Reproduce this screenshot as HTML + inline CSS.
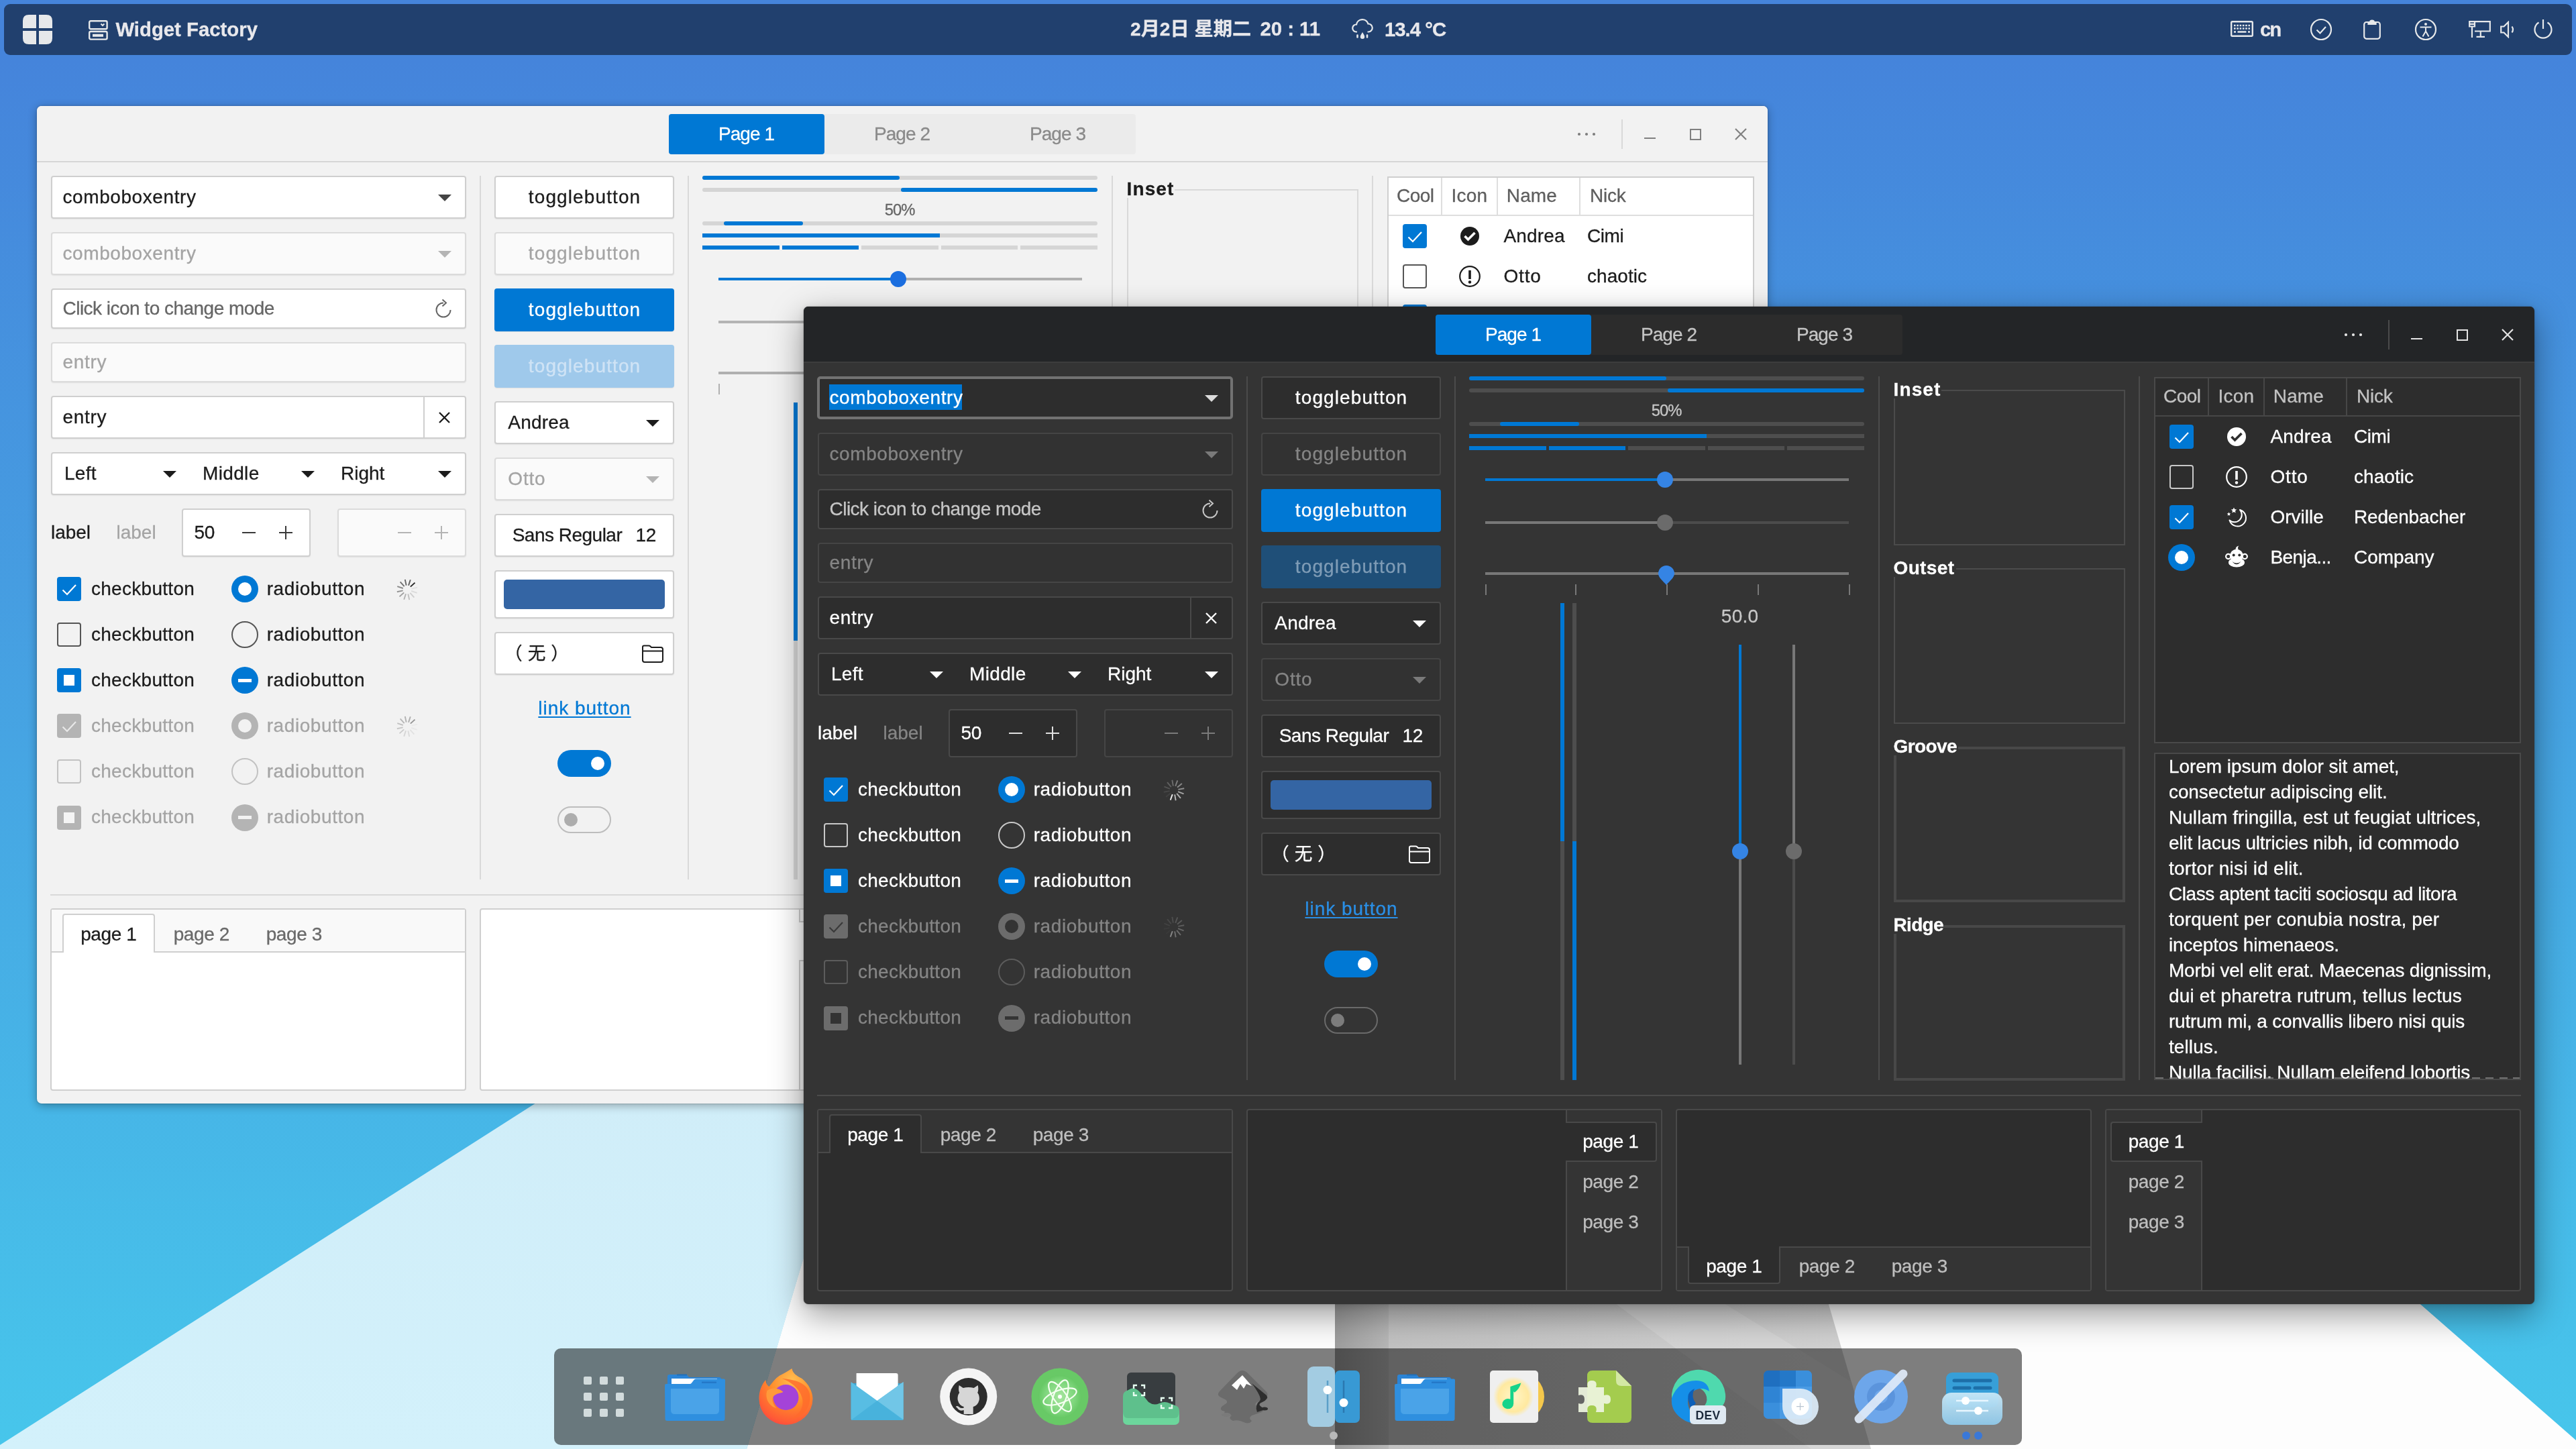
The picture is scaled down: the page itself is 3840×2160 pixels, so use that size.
<!DOCTYPE html>
<html lang="zh-CN"><head><meta charset="utf-8"><title>Widget Factory</title><style>
*{box-sizing:border-box}
html,body{margin:0;padding:0}
body{width:3840px;height:2160px;position:relative;overflow:hidden;background:linear-gradient(180deg,#4584db 0%,#4584db 4%,#47c6eb 100%);font-family:"Liberation Sans","Noto Sans CJK SC",sans-serif;font-size:28px}
.abs,.win div,.win i,.win svg,.panel div,.panel svg,.dock svg,.dock i{position:absolute}
i{display:block;font-style:normal}
.t{position:absolute;white-space:pre;color:var(--fg);-webkit-text-stroke:.3px}
.cjk{font-family:"Liberation Sans","Noto Sans CJK SC",sans-serif;text-spacing-trim:space-all}
.win{will-change:transform;position:absolute;width:2580px;height:1487px;border-radius:7px;background:var(--bg)}
.win.light{--bg:#f2f2f2;--hb:#f2f2f2;--hbline:#d6d6d6;--base:#fff;--bd:#cfcfcf;--fg:#1c1c1c;--fg2:#666;--fg3:#666;--dfg:#a4a4a4;--disbg:#fafafa;--disbd:#dbdbdb;
 --acc:#0078d4;--sep:#d9d9d9;--tr:#d5d5d5;--str:#b0b0b0;--strd:#b4b4b4;--strd2:#d4d4d4;--knob:#1c6fe0;--knobd:#b8b8b8;--swbg:#ebebeb;--swtx:#8a8a8a;--hfg:#808080;
 --onaccd:#cfe3f5;--accd:#9fc9eb;--cbbd:#555;--cbd:#b4b4b4;--cbdbd:#c2c2c2;--arrow:#444;--darrow:#b4b4b4;--thtx:#5e5e5e;--tline:#dedede;--nbtx:#6a6a6a;--nbhead:#f9f9f9;--swoff:#bdbdbd;--swknob:#adadad;--fgs:#3a3a3a;--spin:#222;--grv:#dcdcdc;
 box-shadow:0 3px 14px rgba(0,0,0,.32),0 0 3px rgba(0,0,0,.25)}
.win.dark{--bg:#343434;--hb:#232527;--hbline:#3d3d3d;--base:#2d2d2d;--bd:#494949;--fg:#fff;--fg2:#c6c6c6;--fg3:#c6c6c6;--dfg:#858585;--disbg:#323232;--disbd:#454545;
 --acc:#0078d4;--sep:#4b4b4b;--tr:#4e4e4e;--str:#787878;--strd:#787878;--strd2:#4c4c4c;--knob:#3584e4;--knobd:#6b6b6b;--swbg:#2c2c2c;--swtx:#c4c4c4;--hfg:#e4e4e4;
 --onaccd:#7f9cb6;--accd:#1f4f78;--cbbd:#c8c8c8;--cbd:#6c6c6c;--cbdbd:#5c5c5c;--arrow:#dcdcdc;--darrow:#7a7a7a;--thtx:#c2c2c2;--tline:#474747;--nbtx:#bebebe;--nbhead:#343434;--swoff:#6a6a6a;--swknob:#7c7c7c;--fgs:#e0e0e0;--spin:#eee;--grv:#484848;
 box-shadow:0 16px 50px rgba(0,0,0,.4),0 2px 12px rgba(0,0,0,.14),0 0 2px rgba(0,0,0,.35)}
.hb{left:0;top:0;width:2580px;height:84px;background:var(--hb);border-bottom:2px solid var(--hbline);border-radius:7px 7px 0 0}
.swbg{background:var(--swbg);border-radius:4px}
.swon{background:var(--acc);border-radius:4px}
.swtx{color:var(--swtx)}
.onacc{color:#fff}
.onaccd{color:var(--onaccd)}
.hdot{width:3.5px;height:3.5px;border-radius:50%;background:var(--hfg)}
.hsepv{background:var(--sep)}
.hfg{color:var(--hfg)}
i.ln{background:currentColor}
.hmax{width:17px;height:17px;border:2px solid var(--hfg)}
.fg{color:var(--fg)}.fg2{color:var(--fg2)}.fg3{color:var(--fg3)}.fg2b{color:var(--fg2)}.dtx{color:var(--dfg)}.dfg{color:var(--darrow)}.fgs{color:var(--fgs)}
.fgarrow{color:var(--arrow)}.darrow{color:var(--darrow)}
.en,.bt{background:var(--base);border:2px solid var(--bd);border-radius:4px}
.light .en,.light .bt{box-shadow:0 1px 1.5px rgba(0,0,0,.07)}
.en.dis,.bt.dis{background:var(--disbg);border-color:var(--disbd)}
.en.foc{border:4px solid #727272;border-radius:5px}
.sel{background:var(--acc)}
.vline{background:var(--bd)}
.bt.on{background:var(--acc);border-color:var(--acc)}
.bt.on.dis{background:var(--accd);border-color:var(--accd)}
.swatch{background:#3465a4;border-radius:5px}
.link{color:var(--acc);text-decoration:underline;text-decoration-thickness:2px;text-underline-offset:3px}
.dark .link{color:#2a8fe6}
.sw{border-radius:20px}
.sw.on{background:var(--acc)}
.sw.off{border:2px solid var(--swoff)}
.sw i{top:10px;width:20px;height:20px;border-radius:50%;background:#fff}
.sw.off i{top:8px;left:9px;background:var(--swknob)}
.cb{width:36px;height:36px;border-radius:4px;color:#fff}
.cb.off{border:2px solid var(--cbbd)}
.cb.on,.cb.mix{background:var(--acc)}
.cb.dis.on,.cb.dis.mix{background:var(--cbd)}
.cb.dis.off{border-color:var(--cbdbd)}
.light .cb.dis{color:#e8e8e8}.dark .cb.dis{color:#3a3a3a}
.cb .sq{left:10px;top:10px;width:16px;height:16px;background:currentColor}
.light .cb.dis .sq{background:#f4f4f4}.dark .cb.dis .sq{background:#333}
.rb{width:40px;height:40px;border-radius:50%}
.rb.off{border:2px solid var(--cbbd)}
.rb.on,.rb.mix{background:var(--acc)}
.rb.dis.on,.rb.dis.mix{background:var(--cbd)}
.rb.dis.off{border-color:var(--cbdbd)}
.rb .dot{left:10px;top:10px;width:20px;height:20px;border-radius:50%;background:#fff}
.rb .bar{left:10px;top:17.5px;width:20px;height:5px;background:#fff}
.light .rb.dis .dot,.light .rb.dis .bar{background:#f2f2f2}
.dark .rb.dis .dot,.dark .rb.dis .bar{background:#343434}
.spin{color:var(--spin)}.spin.dis{opacity:.45}
.vsep,.hsep{background:var(--sep)}
.tr{background:var(--tr)}.fill{background:var(--acc)}.rnd{border-radius:3px}
.str{background:var(--str)}.strd{background:var(--strd)}.strd2{background:var(--strd2)}
.knob{width:24px;height:24px;border-radius:50%;background:var(--knob)}
.knob.dis{background:var(--knobd)}
.knobc{color:var(--knob)}
.tick{background:var(--str)}
.fr{border:2px solid var(--sep)}
.fr.gr,.fr.rd{border-width:4px;border-color:var(--grv)}
.frlbg{background:var(--bg)}
.view{background:var(--base);border:2px solid var(--bd)}
.clip{overflow:hidden}
.dash{background:repeating-linear-gradient(90deg,var(--dfg) 0 12px,transparent 12px 20.500px);opacity:.8}
.thead{background:var(--base)}
.tline{background:var(--tline)}
.thtx{color:var(--thtx)}
.knock{stroke:var(--base)}.knockf{fill:var(--base)}
.nb{background:var(--base);border:2px solid var(--bd);border-radius:4px}
.nbhead{background:var(--nbhead)}
.nbline{background:var(--bd)}
.nbtab{background:var(--base);border:2px solid var(--bd)}
.nbtx{color:var(--nbtx)}
.panel{will-change:transform;position:absolute;left:6px;top:6px;width:3828px;height:76px;border-radius:9px;background:#21406e;color:#e8e8ec}
.panel .t{color:#e8e8ec;font-weight:700;font-size:29.33px}
.dock{position:absolute;left:826px;top:2010px;width:2188px;height:144px;border-radius:10px;background:rgba(0,0,0,.5)}
</style></head><body><svg class="abs" style="position:absolute;left:0;top:0" width="3840" height="2160" viewBox="0 0 3840 2160"><defs><linearGradient id="lb" x1="0" y1="0" x2="0" y2="1"><stop offset="0" stop-color="#cdeaf6"/><stop offset="1" stop-color="#d3f1fb"/></linearGradient><linearGradient id="gs" x1="0" y1="0" x2="1" y2="0"><stop offset="0" stop-color="#9d9d9d"/><stop offset="1" stop-color="#b7b7b7"/></linearGradient><linearGradient id="gr" x1="0" y1="0" x2="1" y2="0"><stop offset="0" stop-color="#c2c2c2"/><stop offset="1" stop-color="#d2d2d2"/></linearGradient><linearGradient id="wsh" x1="0" y1="0" x2="0" y2="1"><stop offset="0" stop-color="#000" stop-opacity=".0"/><stop offset="1" stop-color="#000" stop-opacity="0"/></linearGradient></defs><path d="M0 2154L1600 1133L1340 1400L1113 2160H0Z" fill="url(#lb)"/><path d="M1113 2160L1250 1700L1300 1500H3100L3840 2147V2160Z" fill="#fdfdfd"/><path d="M2070 1900H2713L2789 2160H2070Z" fill="url(#gr)"/><path d="M2350 1900L2500 1900L2760 2060L2789 2160L2700 2160Z" fill="#dadada" opacity=".55"/><path d="M1990 1900H2070V2160H1990Z" fill="url(#gs)"/></svg><div class="panel"><svg style="left:28px;top:16px" width="44" height="44" viewBox="0 0 44 44" fill="#e6e8ea"><path d="M9 0H20V20H0V9Q0 0 9 0Z"/><path d="M24 0H35Q44 0 44 9V20H24Z"/><path d="M0 24H20V44H9Q0 44 0 35Z"/><path d="M24 24H44V35Q44 44 35 44H24Z"/></svg><svg style="left:126px;top:24px" width="29" height="30" viewBox="0 0 29 30" fill="none" stroke="#e6e8ea" stroke-width="2.4"><rect x="1.2" y="1.2" width="26.4" height="12" rx="2"/><rect x="1.2" y="17" width="26.4" height="11.6" rx="2"/><path d="M6 22.8H22" stroke-width="4"/><path d="M18.5 5.500L21 8L23.500 5.500" stroke-width="2"/></svg><div class="t" style="top:16px;height:44px;line-height:44px;font-size:29.33px;font-weight:700;left:166.4px;">Widget Factory</div><div class="t" style="left:1679px;top:14.5px;height:44px;line-height:44px"><span style="font-size:28.2px">2月2日 星期二</span><span style="margin-left:-3px">  20 : 11</span></div><svg style="left:2008px;top:20px" width="34" height="36" viewBox="0 0 34 36" fill="none" stroke="#e6e8ea" stroke-width="2.2"><path d="M9 21.500H7.500A5.500 5.500 0 0 1 8 10.500A9 9 0 0 1 25.500 9.500A6 6 0 0 1 26 21.500H24.500"/><path d="M9.5 26.500v3M24 26.500v3" stroke-width="2.6" stroke-linecap="round"/><path d="M17 22C19 25.500 20.200 27 20.200 28.800A3.200 3.200 0 0 1 13.800 28.800C13.800 27 15 25.500 17 22Z" fill="#e6e8ea" stroke="none"/></svg><div class="t" style="top:16px;height:44px;line-height:44px;font-size:29.33px;font-weight:700;left:2058px;letter-spacing:-1px;">13.4 °C</div><svg style="left:3319px;top:25px" width="34" height="24" viewBox="0 0 34 24" fill="none" stroke="#e6e8ea"><rect x="1.2" y="1.2" width="31.6" height="21.600" rx="1.500" stroke-width="2.4"/><path d="M5 7H29M5 11.500H29" stroke-width="2.600" stroke-dasharray="2.600 1.700"/><path d="M5 16.500H8M10.500 16.500H23.500M26 16.500H29" stroke-width="2.600"/></svg><div class="t" style="top:16px;height:44px;line-height:44px;font-size:29.33px;font-weight:700;left:3363px;letter-spacing:-2px;">cn</div><svg style="left:3437px;top:21px" width="34" height="34" viewBox="-17 -17 34 34" fill="none" stroke="#e6e8ea" stroke-width="2.2"><circle r="15"/><path d="M-6.500 0.500L-1.500 5.500L7 -4"/></svg><svg style="left:3517px;top:21px" width="26" height="32" viewBox="0 0 26 32" fill="none" stroke="#e6e8ea" stroke-width="2.2"><rect x="1.2" y="6" width="23.600" height="24.800" rx="3.500"/><path d="M7.500 9V6.500H10A3 3 0 0 1 16 6.500H18.500V9Z" fill="#e6e8ea"/></svg><svg style="left:3593px;top:21px" width="34" height="34" viewBox="-17 -17 34 34" fill="none" stroke="#e6e8ea" stroke-width="2.200"><circle r="15"/><circle cy="-8" r="2" fill="#e6e8ea" stroke="none"/><path d="M-8.500 -3.500H8.500M0 -3.500V2.500M-4.500 10.500L0 2.500L4.500 10.500" stroke-width="2"/></svg><svg style="left:3674px;top:25px" width="33" height="26" viewBox="0 0 33 26" fill="none" stroke="#e6e8ea" stroke-width="2.200"><path d="M9 1.200H31.800V15.500H9"/><path d="M1.200 1.200H9V8.500H1.200ZM1.200 4.800H9M5 8.500V25"/><path d="M11.500 23.800H24M17.800 15.500V23.800"/></svg><svg style="left:3721px;top:25px" width="22" height="26" viewBox="0 0 22 26" fill="none" stroke="#e6e8ea" stroke-width="2.200"><path d="M1.200 8.500H5.500L12 2V24L5.500 17.500H1.200Z"/><path d="M17.500 8.500Q20.500 13 17.500 17.500"/></svg><svg style="left:3770px;top:22px" width="30" height="32" viewBox="-15 -16 30 32" fill="none" stroke="#e6e8ea" stroke-width="2.200"><path d="M-6.500 -10.500A12.500 12.500 0 1 0 6.500 -10.500"/><path d="M0 -15V-1"/></svg></div><div class="win light" style="left:55px;top:158px"><div class="hb"></div><div class="swbg" style="left:942px;top:12px;width:696px;height:60px;"></div><div class="swon" style="left:942px;top:12px;width:232px;height:60px;"></div><div class="t onacc" style="top:20px;height:44px;line-height:44px;letter-spacing:-0.96px;left:457.52px;width:1200px;text-align:center;">Page 1</div><div class="t swtx" style="top:20px;height:44px;line-height:44px;letter-spacing:-0.96px;left:689.52px;width:1200px;text-align:center;">Page 2</div><div class="t swtx" style="top:20px;height:44px;line-height:44px;letter-spacing:-0.96px;left:921.52px;width:1200px;text-align:center;">Page 3</div><i class="hdot" style="left:2297.25px;top:40.25px"></i><i class="hdot" style="left:2308.25px;top:40.25px"></i><i class="hdot" style="left:2319.25px;top:40.25px"></i><div class="hsepv" style="left:2362px;top:20px;width:2px;height:44px;"></div><i class="ln hfg" style="left:2396px;top:47px;width:17px;height:2px"></i><i class="hmax" style="left:2464px;top:34px"></i><svg class="hfg" style="left:2530px;top:32px" width="20" height="20" viewBox="-10.0 -10.0 20 20"><path d="M-8.0 -8.0L8.0 8.0M8.0 -8.0L-8.0 8.0" stroke="currentColor" stroke-width="2.2" fill="none"/></svg><div class="vsep" style="left:660px;top:104px;width:2px;height:1049px;"></div><div class="vsep" style="left:970px;top:104px;width:2px;height:1049px;"></div><div class="vsep" style="left:1602px;top:104px;width:2px;height:1049px;"></div><div class="vsep" style="left:1990px;top:104px;width:2px;height:1049px;"></div><div class="en" style="left:20.5px;top:104px;width:619.5px;height:64px;"></div><div class="t" style="top:114px;height:44px;line-height:44px;letter-spacing:0.58px;left:38.5px;">comboboxentry</div><svg class="fgarrow" style="left:597.5px;top:132px" width="20" height="10" viewBox="0 0 20 10"><path d="M0 0H20L10 10Z" fill="currentColor"/></svg><div class="en dis" style="left:20.5px;top:188px;width:619.5px;height:64px;"></div><div class="t dtx" style="top:198px;height:44px;line-height:44px;letter-spacing:0.58px;left:38.5px;">comboboxentry</div><svg class="darrow" style="left:597.5px;top:216px" width="20" height="10" viewBox="0 0 20 10"><path d="M0 0H20L10 10Z" fill="currentColor"/></svg><div class="en" style="left:20.5px;top:272px;width:619.5px;height:60px;"></div><div class="t fg2" style="top:280px;height:44px;line-height:44px;letter-spacing:-0.52px;left:38.5px;">Click icon to change mode</div><svg class="fg2" style="left:592px;top:287px" width="28" height="32" viewBox="-14 -16 28 32"><path d="M0 -9.5A10.5 10.5 0 1 0 10.5 1" fill="none" stroke="currentColor" stroke-width="2"/><path d="M-1.5 -14.5L4 -9.5L-1.5 -4.5" fill="none" stroke="currentColor" stroke-width="2"/></svg><div class="en dis" style="left:20.5px;top:352px;width:619.5px;height:60px;"></div><div class="t dtx" style="top:360px;height:44px;line-height:44px;letter-spacing:0.7px;left:38.5px;">entry</div><div class="en" style="left:20.5px;top:432px;width:619.5px;height:64px;"></div><div class="vline" style="left:576px;top:434px;width:2px;height:60px;"></div><div class="t" style="top:442px;height:44px;line-height:44px;letter-spacing:0.7px;left:38.5px;">entry</div><svg class="fg" style="left:598.2px;top:455px" width="19" height="19" viewBox="-9.5 -9.5 19 19"><path d="M-7.5 -7.5L7.5 7.5M7.5 -7.5L-7.5 7.5" stroke="currentColor" stroke-width="2.4" fill="none"/></svg><div class="en" style="left:20.5px;top:516px;width:619.5px;height:64px;"></div><div class="t" style="top:526px;height:44px;line-height:44px;letter-spacing:0.27px;left:41px;">Left</div><svg class="fg" style="left:188px;top:544px" width="20" height="10" viewBox="0 0 20 10"><path d="M0 0H20L10 10Z" fill="currentColor"/></svg><div class="t" style="top:526px;height:44px;line-height:44px;letter-spacing:0.35px;left:247px;">Middle</div><svg class="fg" style="left:394px;top:544px" width="20" height="10" viewBox="0 0 20 10"><path d="M0 0H20L10 10Z" fill="currentColor"/></svg><div class="t" style="top:526px;height:44px;line-height:44px;left:453px;">Right</div><svg class="fg" style="left:597.5px;top:544px" width="20" height="10" viewBox="0 0 20 10"><path d="M0 0H20L10 10Z" fill="currentColor"/></svg><div class="t" style="top:614px;height:44px;line-height:44px;letter-spacing:-0.03px;left:21px;">label</div><div class="t dtx" style="top:614px;height:44px;line-height:44px;letter-spacing:-0.03px;left:118.6px;">label</div><div class="en" style="left:216px;top:600px;width:192px;height:72px;"></div><div class="t" style="top:614px;height:44px;line-height:44px;letter-spacing:-0.33px;left:234.6px;">50</div><i class="ln fgs" style="left:306px;top:635px;width:20px;height:2px"></i><i class="ln fgs" style="left:361px;top:635px;width:20px;height:2px"></i><i class="ln fgs" style="left:370px;top:626px;width:2px;height:20px"></i><div class="en dis" style="left:448px;top:600px;width:192px;height:72px;"></div><i class="ln dfg" style="left:538px;top:635px;width:20px;height:2px"></i><i class="ln dfg" style="left:593px;top:635px;width:20px;height:2px"></i><i class="ln dfg" style="left:602px;top:626px;width:2px;height:20px"></i><div class="cb on" style="left:29.7px;top:702px"><svg width="36" height="36" viewBox="0 0 36 36" style="position:absolute;left:0;top:0"><path d="M8.5 19.5L15 26L28 12" fill="none" stroke="currentColor" stroke-width="2.2"/></svg></div><div class="t" style="top:697.5px;height:44px;line-height:44px;letter-spacing:0.3px;left:80.9px;">checkbutton</div><div class="rb on" style="left:289.8px;top:700px"><i class="dot"></i></div><div class="t" style="top:697.5px;height:44px;line-height:44px;letter-spacing:0.58px;left:342.7px;">radiobutton</div><svg class="spin" style="left:535.3px;top:703.6px" width="34" height="34" viewBox="-17 -17 34 34"><path d="M4.83 -4.35L11.52 -10.37" stroke="currentColor" stroke-width="1.9" stroke-opacity="1.00"/><path d="M2.01 -6.18L4.79 -14.74" stroke="currentColor" stroke-width="1.9" stroke-opacity="0.72"/><path d="M-1.35 -6.36L-3.22 -15.16" stroke="currentColor" stroke-width="1.9" stroke-opacity="0.68"/><path d="M-4.35 -4.83L-10.37 -11.52" stroke="currentColor" stroke-width="1.9" stroke-opacity="0.62"/><path d="M-6.18 -2.01L-14.74 -4.79" stroke="currentColor" stroke-width="1.9" stroke-opacity="0.50"/><path d="M-6.36 1.35L-15.16 3.22" stroke="currentColor" stroke-width="1.9" stroke-opacity="0.45"/><path d="M-4.83 4.35L-11.52 10.37" stroke="currentColor" stroke-width="1.9" stroke-opacity="0.40"/><path d="M-2.01 6.18L-4.79 14.74" stroke="currentColor" stroke-width="1.9" stroke-opacity="0.30"/><path d="M1.35 6.36L3.22 15.16" stroke="currentColor" stroke-width="1.9" stroke-opacity="0.24"/><path d="M4.35 4.83L10.37 11.52" stroke="currentColor" stroke-width="1.9" stroke-opacity="0.17"/><path d="M6.18 2.01L14.74 4.79" stroke="currentColor" stroke-width="1.9" stroke-opacity="0.10"/><path d="M6.36 -1.35L15.16 -3.22" stroke="currentColor" stroke-width="1.9" stroke-opacity="0.07"/></svg><div class="cb off" style="left:29.7px;top:770.1px"></div><div class="t" style="top:765.6px;height:44px;line-height:44px;letter-spacing:0.3px;left:80.9px;">checkbutton</div><div class="rb off" style="left:289.8px;top:768.1px"></div><div class="t" style="top:765.6px;height:44px;line-height:44px;letter-spacing:0.58px;left:342.7px;">radiobutton</div><div class="cb mix" style="left:29.7px;top:838.2px"><i class="sq"></i></div><div class="t" style="top:833.7px;height:44px;line-height:44px;letter-spacing:0.3px;left:80.9px;">checkbutton</div><div class="rb mix" style="left:289.8px;top:836.2px"><i class="bar"></i></div><div class="t" style="top:833.7px;height:44px;line-height:44px;letter-spacing:0.58px;left:342.7px;">radiobutton</div><div class="cb on dis" style="left:29.7px;top:906.3px"><svg width="36" height="36" viewBox="0 0 36 36" style="position:absolute;left:0;top:0"><path d="M8.5 19.5L15 26L28 12" fill="none" stroke="currentColor" stroke-width="2.2"/></svg></div><div class="t dtx" style="top:901.8px;height:44px;line-height:44px;letter-spacing:0.3px;left:80.9px;">checkbutton</div><div class="rb on dis" style="left:289.8px;top:904.3px"><i class="dot"></i></div><div class="t dtx" style="top:901.8px;height:44px;line-height:44px;letter-spacing:0.58px;left:342.7px;">radiobutton</div><svg class="spin dis" style="left:535.3px;top:907.9px" width="34" height="34" viewBox="-17 -17 34 34"><path d="M4.83 -4.35L11.52 -10.37" stroke="currentColor" stroke-width="1.9" stroke-opacity="1.00"/><path d="M2.01 -6.18L4.79 -14.74" stroke="currentColor" stroke-width="1.9" stroke-opacity="0.72"/><path d="M-1.35 -6.36L-3.22 -15.16" stroke="currentColor" stroke-width="1.9" stroke-opacity="0.68"/><path d="M-4.35 -4.83L-10.37 -11.52" stroke="currentColor" stroke-width="1.9" stroke-opacity="0.62"/><path d="M-6.18 -2.01L-14.74 -4.79" stroke="currentColor" stroke-width="1.9" stroke-opacity="0.50"/><path d="M-6.36 1.35L-15.16 3.22" stroke="currentColor" stroke-width="1.9" stroke-opacity="0.45"/><path d="M-4.83 4.35L-11.52 10.37" stroke="currentColor" stroke-width="1.9" stroke-opacity="0.40"/><path d="M-2.01 6.18L-4.79 14.74" stroke="currentColor" stroke-width="1.9" stroke-opacity="0.30"/><path d="M1.35 6.36L3.22 15.16" stroke="currentColor" stroke-width="1.9" stroke-opacity="0.24"/><path d="M4.35 4.83L10.37 11.52" stroke="currentColor" stroke-width="1.9" stroke-opacity="0.17"/><path d="M6.18 2.01L14.74 4.79" stroke="currentColor" stroke-width="1.9" stroke-opacity="0.10"/><path d="M6.36 -1.35L15.16 -3.22" stroke="currentColor" stroke-width="1.9" stroke-opacity="0.07"/></svg><div class="cb off dis" style="left:29.7px;top:974.4px"></div><div class="t dtx" style="top:969.9px;height:44px;line-height:44px;letter-spacing:0.3px;left:80.9px;">checkbutton</div><div class="rb off dis" style="left:289.8px;top:972.4px"></div><div class="t dtx" style="top:969.9px;height:44px;line-height:44px;letter-spacing:0.58px;left:342.7px;">radiobutton</div><div class="cb mix dis" style="left:29.7px;top:1042.5px"><i class="sq"></i></div><div class="t dtx" style="top:1038px;height:44px;line-height:44px;letter-spacing:0.3px;left:80.9px;">checkbutton</div><div class="rb mix dis" style="left:289.8px;top:1040.5px"><i class="bar"></i></div><div class="t dtx" style="top:1038px;height:44px;line-height:44px;letter-spacing:0.58px;left:342.7px;">radiobutton</div><div class="bt" style="left:682px;top:104px;width:268px;height:64px;"></div><div class="t" style="top:114px;height:44px;line-height:44px;letter-spacing:1.11px;left:216.56px;width:1200px;text-align:center;">togglebutton</div><div class="bt dis" style="left:682px;top:188px;width:268px;height:64px;"></div><div class="t dtx" style="top:198px;height:44px;line-height:44px;letter-spacing:1.11px;left:216.56px;width:1200px;text-align:center;">togglebutton</div><div class="bt on" style="left:682px;top:272px;width:268px;height:64px;"></div><div class="t onacc" style="top:282px;height:44px;line-height:44px;letter-spacing:1.11px;left:216.56px;width:1200px;text-align:center;">togglebutton</div><div class="bt on dis" style="left:682px;top:356px;width:268px;height:64px;"></div><div class="t onaccd" style="top:366px;height:44px;line-height:44px;letter-spacing:1.11px;left:216.56px;width:1200px;text-align:center;">togglebutton</div><div class="bt" style="left:682px;top:440px;width:268px;height:64px;"></div><div class="t" style="top:450px;height:44px;line-height:44px;letter-spacing:0.18px;left:702.3px;">Andrea</div><svg class="fg" style="left:908px;top:468px" width="20" height="10" viewBox="0 0 20 10"><path d="M0 0H20L10 10Z" fill="currentColor"/></svg><div class="bt dis" style="left:682px;top:524px;width:268px;height:64px;"></div><div class="t dtx" style="top:534px;height:44px;line-height:44px;letter-spacing:0.82px;left:702.3px;">Otto</div><svg class="darrow" style="left:908px;top:552px" width="20" height="10" viewBox="0 0 20 10"><path d="M0 0H20L10 10Z" fill="currentColor"/></svg><div class="bt" style="left:682px;top:608px;width:268px;height:64px;"></div><div class="t" style="top:618px;height:44px;line-height:44px;letter-spacing:-0.51px;left:708.7px;">Sans Regular</div><div class="t" style="top:618px;height:44px;line-height:44px;letter-spacing:-0.33px;left:892.6px;">12</div><div class="bt" style="left:682px;top:692px;width:268px;height:72px;"></div><div class="swatch" style="left:696px;top:706px;width:240px;height:44px;"></div><div class="bt" style="left:682px;top:784px;width:268px;height:64px;"></div><div class="t cjk" style="top:794px;height:44px;line-height:44px;font-size:26.67px;left:149px;width:1200px;text-align:center;letter-spacing:8px;">（无）</div><svg class="fg" style="left:901px;top:803px" width="34" height="28" viewBox="0 0 34 28"><path d="M2 24V3.5Q2 1.5 4 1.5H11Q12.5 1.5 13.5 2.5L15 4H29Q32 4 32 7V23Q32 26 29 26H5Q2 26 2 23Z" fill="none" stroke="currentColor" stroke-width="2"/><path d="M2 9.5H32" stroke="currentColor" stroke-width="2"/></svg><div class="t link" style="top:876px;height:44px;line-height:44px;letter-spacing:0.96px;left:216.48px;width:1200px;text-align:center;">link button</div><div class="sw on" style="left:776px;top:960px;width:80px;height:40px;"><i style="left:50px"></i></div><div class="sw off" style="left:776px;top:1044px;width:80px;height:40px;"><i style="left:8px"></i></div><div class="tr rnd" style="left:992px;top:104px;width:589px;height:6px;"></div><div class="fill rnd" style="left:992px;top:104px;width:294px;height:6px;"></div><div class="tr rnd" style="left:992px;top:122px;width:589px;height:6px;"></div><div class="fill rnd" style="left:1288px;top:122px;width:293px;height:6px;"></div><div class="t fg3" style="top:132.8px;height:44px;line-height:44px;font-size:23.8px;letter-spacing:-0.96px;left:686.02px;width:1200px;text-align:center;">50%</div><div class="tr rnd" style="left:992px;top:172px;width:589px;height:6px;"></div><div class="fill rnd" style="left:1024px;top:172px;width:118px;height:6px;"></div><div class="tr" style="left:992px;top:190px;width:589px;height:6px;"></div><div class="fill" style="left:992px;top:190px;width:354px;height:6px;"></div><div class="fill" style="left:992px;top:208px;width:114.6px;height:6px;"></div><div class="fill" style="left:1110.6px;top:208px;width:114.6px;height:6px;"></div><div class="tr" style="left:1229.2px;top:208px;width:114.6px;height:6px;"></div><div class="tr" style="left:1347.8px;top:208px;width:114.6px;height:6px;"></div><div class="tr" style="left:1466.4px;top:208px;width:114.6px;height:6px;"></div><div class="str" style="left:1016px;top:256px;width:542px;height:4px;"></div><div class="fill" style="left:1016px;top:256px;width:268px;height:4px;"></div><i class="knob" style="left:1272px;top:246px"></i><div class="strd2" style="left:1016px;top:320px;width:542px;height:4px;"></div><div class="strd" style="left:1016px;top:320px;width:268px;height:4px;"></div><i class="knob dis" style="left:1272px;top:310px"></i><div class="str" style="left:1016px;top:396px;width:542px;height:4px;"></div><svg class="knobc" style="left:1272.6px;top:385px" width="26" height="34" viewBox="-13 -13 26 34"><path d="M0 -12A12 12 0 0 1 12 0C12 6 5 11 0 17C-5 11 -12 6 -12 0A12 12 0 0 1 0 -12Z" fill="currentColor"/></svg><div class="tick" style="left:1016px;top:414px;width:2px;height:16px;"></div><div class="tick" style="left:1150px;top:414px;width:2px;height:16px;"></div><div class="tick" style="left:1285.8px;top:414px;width:2px;height:16px;"></div><div class="tick" style="left:1422px;top:414px;width:2px;height:16px;"></div><div class="tick" style="left:1558px;top:414px;width:2px;height:16px;"></div><div class="tr" style="left:1128px;top:442px;width:6px;height:711px;"></div><div class="fill" style="left:1128px;top:442px;width:6px;height:355px;"></div><div class="tr" style="left:1146px;top:442px;width:6px;height:711px;"></div><div class="fill" style="left:1146px;top:797px;width:6px;height:356px;"></div><div class="t fg2b" style="top:440px;height:44px;line-height:44px;letter-spacing:0.28px;left:795.64px;width:1200px;text-align:center;">50.0</div><div class="str" style="left:1394px;top:504px;width:4px;height:626px;"></div><div class="fill" style="left:1394px;top:504px;width:4px;height:308px;"></div><i class="knob" style="left:1384px;top:800px"></i><div class="strd2" style="left:1474px;top:504px;width:4px;height:626px;"></div><div class="strd" style="left:1474px;top:504px;width:4px;height:308px;"></div><i class="knob dis" style="left:1464px;top:800px"></i><div class="fr in" style="left:1624.5px;top:124px;width:345px;height:232px;"></div><div class="frlbg" style="left:1623.5px;top:108px;width:72px;height:29px;"></div><div class="t" style="top:102px;height:44px;line-height:44px;font-weight:700;letter-spacing:1.13px;left:1624.5px;">Inset</div><div class="fr out" style="left:1624.5px;top:390px;width:345px;height:232px;"></div><div class="frlbg" style="left:1623.5px;top:374px;width:94px;height:29px;"></div><div class="t" style="top:368px;height:44px;line-height:44px;font-weight:700;letter-spacing:0.36px;left:1624.5px;">Outset</div><div class="fr gr" style="left:1624.5px;top:656px;width:345px;height:232px;"></div><div class="frlbg" style="left:1623.5px;top:640px;width:97px;height:29px;"></div><div class="t" style="top:634px;height:44px;line-height:44px;font-weight:700;letter-spacing:-0.57px;left:1624.5px;">Groove</div><div class="fr rd" style="left:1624.5px;top:922px;width:345px;height:232px;"></div><div class="frlbg" style="left:1623.5px;top:906px;width:75px;height:29px;"></div><div class="t" style="top:900px;height:44px;line-height:44px;font-weight:700;letter-spacing:-0.66px;left:1624.5px;">Ridge</div><div class="view" style="left:2012.5px;top:105px;width:547px;height:546px;"></div><div class="thead" style="left:2014.5px;top:107px;width:543px;height:56px;"></div><div class="tline" style="left:2014.5px;top:162px;width:543px;height:2px;"></div><div class="tline" style="left:2093.3px;top:107px;width:2px;height:56px;"></div><div class="tline" style="left:2175.5px;top:107px;width:2px;height:56px;"></div><div class="tline" style="left:2299.4px;top:107px;width:2px;height:56px;"></div><div class="t thtx" style="top:111.5px;height:44px;line-height:44px;letter-spacing:-0.55px;left:2027px;">Cool</div><div class="t thtx" style="top:111.5px;height:44px;line-height:44px;letter-spacing:0.23px;left:2108.4px;">Icon</div><div class="t thtx" style="top:111.5px;height:44px;line-height:44px;letter-spacing:0.12px;left:2190.8px;">Name</div><div class="t thtx" style="top:111.5px;height:44px;line-height:44px;letter-spacing:-0.22px;left:2315px;">Nick</div><div class="cb on" style="left:2036px;top:176px"><svg width="36" height="36" viewBox="0 0 36 36" style="position:absolute;left:0;top:0"><path d="M8.5 19.5L15 26L28 12" fill="none" stroke="currentColor" stroke-width="2.2"/></svg></div><svg class="fg" style="left:2120.7px;top:179px" width="30" height="30" viewBox="-15 -15 30 30"><circle r="14" fill="currentColor"/><path d="M-7.5 0L-2.5 5L7.5 -5" fill="none" class="knock" stroke-width="3.6"/></svg><div class="t" style="top:172px;height:44px;line-height:44px;letter-spacing:0.18px;left:2186.5px;">Andrea</div><div class="t" style="top:172px;height:44px;line-height:44px;letter-spacing:-0.42px;left:2311px;">Cimi</div><div class="cb off" style="left:2036px;top:236px"></div><svg class="fg" style="left:2118.7px;top:237px" width="34" height="34" viewBox="-17 -17 34 34"><circle r="14.8" fill="none" stroke="currentColor" stroke-width="2.2"/><path d="M0 -9V4" stroke="currentColor" stroke-width="3.6"/><circle cy="8.5" r="2.2" fill="currentColor"/></svg><div class="t" style="top:232px;height:44px;line-height:44px;letter-spacing:0.82px;left:2186.5px;">Otto</div><div class="t" style="top:232px;height:44px;line-height:44px;letter-spacing:0.05px;left:2311px;">chaotic</div><div class="cb on" style="left:2036px;top:296px"><svg width="36" height="36" viewBox="0 0 36 36" style="position:absolute;left:0;top:0"><path d="M8.5 19.5L15 26L28 12" fill="none" stroke="currentColor" stroke-width="2.2"/></svg></div><svg class="fg" style="left:2119.7px;top:298px" width="34" height="34" viewBox="-16 -16 34 34"><path d="M5.040 -10.990A12.500 12.500 0 1 1 -10.490 4.540A11 11 0 0 0 5.040 -10.990Z" fill="none" stroke="currentColor" stroke-width="2" stroke-linejoin="round"/><path d="M-4 -14.500l1.300 2.700 2.900.3-2.200 2 .6 2.900-2.600-1.500-2.600 1.500.6-2.900-2.200-2 2.900-.3z" fill="currentColor"/><path d="M-11.500 -7.500l.9 1.800 1.900.2-1.400 1.300.4 1.900-1.800-1-1.800 1 .4-1.900-1.400-1.300 1.900-.2z" fill="currentColor"/></svg><div class="t" style="top:292px;height:44px;line-height:44px;letter-spacing:-0.01px;left:2186.5px;">Orville</div><div class="t" style="top:292px;height:44px;line-height:44px;letter-spacing:-0.18px;left:2311px;">Redenbacher</div><div class="rb on" style="left:2034px;top:354px"><i class="dot"></i></div><svg class="fg" style="left:2117.7px;top:355px" width="36" height="36" viewBox="-18 -19 36 36"><circle cx="-12.300" cy="-1.500" r="3.600" fill="none" stroke="currentColor" stroke-width="2.200"/><circle cx="12.300" cy="-1.500" r="3.600" fill="none" stroke="currentColor" stroke-width="2.200"/><circle cx="0" cy="-2.500" r="9.800" fill="currentColor"/><ellipse cx="0" cy="7.500" rx="12" ry="7" fill="currentColor"/><path d="M-1.500 -12C-1.500 -15 0.500 -17 3.500 -17.500C1.800 -16 1.800 -14 2.500 -12Z" fill="currentColor"/><circle cx="-4.300" cy="-3.500" r="2" class="knockf"/><circle cx="4.300" cy="-3.500" r="2" class="knockf"/><path d="M-6.500 6Q0 11 6.500 6Q0 14.500 -6.500 6Z" class="knockf"/></svg><div class="t" style="top:352px;height:44px;line-height:44px;letter-spacing:-0.58px;left:2186.5px;">Benja...</div><div class="t" style="top:352px;height:44px;line-height:44px;letter-spacing:-0.07px;left:2311px;">Company</div><div class="view clip" style="left:2012.5px;top:665px;width:547px;height:488px;"><div class="t" style="top:-3px;height:44px;line-height:44px;letter-spacing:-0.07px;left:20.5px;">Lorem ipsum dolor sit amet,</div><div class="t" style="top:35px;height:44px;line-height:44px;letter-spacing:-0.1px;left:20.5px;">consectetur adipiscing elit.</div><div class="t" style="top:73px;height:44px;line-height:44px;letter-spacing:0.04px;left:20.5px;">Nullam fringilla, est ut feugiat ultrices,</div><div class="t" style="top:111px;height:44px;line-height:44px;letter-spacing:-0.21px;left:20.5px;">elit lacus ultricies nibh, id commodo</div><div class="t" style="top:149px;height:44px;line-height:44px;letter-spacing:0.24px;left:20.5px;">tortor nisi id elit.</div><div class="t" style="top:187px;height:44px;line-height:44px;letter-spacing:-0.46px;left:20.5px;">Class aptent taciti sociosqu ad litora</div><div class="t" style="top:225px;height:44px;line-height:44px;letter-spacing:0.15px;left:20.5px;">torquent per conubia nostra, per</div><div class="t" style="top:263px;height:44px;line-height:44px;letter-spacing:-0.15px;left:20.5px;">inceptos himenaeos.</div><div class="t" style="top:301px;height:44px;line-height:44px;letter-spacing:-0.23px;left:20.5px;">Morbi vel elit erat. Maecenas dignissim,</div><div class="t" style="top:339px;height:44px;line-height:44px;letter-spacing:0.16px;left:20.5px;">dui et pharetra rutrum, tellus lectus</div><div class="t" style="top:377px;height:44px;line-height:44px;letter-spacing:-0.22px;left:20.5px;">rutrum mi, a convallis libero nisi quis</div><div class="t" style="top:415px;height:44px;line-height:44px;letter-spacing:0.09px;left:20.5px;">tellus.</div><div class="t" style="top:453px;height:44px;line-height:44px;letter-spacing:-0.13px;left:20.5px;">Nulla facilisi. Nullam eleifend lobortis</div><div class="dash" style="left:0px;top:482px;width:547px;height:2px;"></div></div><div class="hsep" style="left:20px;top:1175px;width:2540px;height:2px;"></div><div class="nb" style="left:20px;top:1196px;width:620px;height:272px;"></div><div class="nbhead" style="left:22px;top:1198px;width:616px;height:63px;"></div><div class="nbline" style="left:22px;top:1260px;width:616px;height:2px;"></div><div class="nbtab" style="left:38px;top:1204px;width:138px;height:58px;border-bottom:0;border-radius:4px 4px 0 0;"></div><div class="t" style="top:1212.5px;height:44px;line-height:44px;letter-spacing:-0.4px;left:-493.2px;width:1200px;text-align:center;">page 1</div><div class="t nbtx" style="top:1212.5px;height:44px;line-height:44px;letter-spacing:-0.4px;left:-354.7px;width:1200px;text-align:center;">page 2</div><div class="t nbtx" style="top:1212.5px;height:44px;line-height:44px;letter-spacing:-0.4px;left:-216.7px;width:1200px;text-align:center;">page 3</div><div class="nb" style="left:660px;top:1196px;width:620px;height:272px;"></div><div class="nbhead" style="left:1136px;top:1198px;width:142px;height:268px;"></div><div class="nbline" style="left:1135.5px;top:1198px;width:2px;height:268px;"></div><div class="nbtab" style="left:1135.5px;top:1214.5px;width:136px;height:60px;border-left:0;border-radius:0 4px 4px 0;"></div><div class="t" style="top:1223px;height:44px;line-height:44px;letter-spacing:-0.4px;left:602.8px;width:1200px;text-align:center;">page 1</div><div class="t nbtx" style="top:1283px;height:44px;line-height:44px;letter-spacing:-0.4px;left:602.8px;width:1200px;text-align:center;">page 2</div><div class="t nbtx" style="top:1343px;height:44px;line-height:44px;letter-spacing:-0.4px;left:602.8px;width:1200px;text-align:center;">page 3</div><div class="nb" style="left:1300px;top:1196px;width:620px;height:272px;"></div><div class="nbhead" style="left:1302px;top:1402px;width:616px;height:64px;"></div><div class="nbline" style="left:1302px;top:1401px;width:616px;height:2px;"></div><div class="nbtab" style="left:1318px;top:1401px;width:138px;height:56px;border-top:0;border-radius:0 0 4px 4px;"></div><div class="t" style="top:1408.5px;height:44px;line-height:44px;letter-spacing:-0.4px;left:786.8px;width:1200px;text-align:center;">page 1</div><div class="t nbtx" style="top:1408.5px;height:44px;line-height:44px;letter-spacing:-0.4px;left:925.3px;width:1200px;text-align:center;">page 2</div><div class="t nbtx" style="top:1408.5px;height:44px;line-height:44px;letter-spacing:-0.4px;left:1063.3px;width:1200px;text-align:center;">page 3</div><div class="nb" style="left:1940px;top:1196px;width:620px;height:272px;"></div><div class="nbhead" style="left:1942px;top:1198px;width:142px;height:268px;"></div><div class="nbline" style="left:2082.5px;top:1198px;width:2px;height:268px;"></div><div class="nbtab" style="left:1948px;top:1214.5px;width:136.5px;height:60px;border-right:0;border-radius:4px 0 0 4px;"></div><div class="t" style="top:1223px;height:44px;line-height:44px;letter-spacing:-0.4px;left:1416.3px;width:1200px;text-align:center;">page 1</div><div class="t nbtx" style="top:1283px;height:44px;line-height:44px;letter-spacing:-0.4px;left:1416.3px;width:1200px;text-align:center;">page 2</div><div class="t nbtx" style="top:1343px;height:44px;line-height:44px;letter-spacing:-0.4px;left:1416.3px;width:1200px;text-align:center;">page 3</div></div><div class="win dark" style="left:1198px;top:457px"><div class="hb"></div><div class="swbg" style="left:942px;top:12px;width:696px;height:60px;"></div><div class="swon" style="left:942px;top:12px;width:232px;height:60px;"></div><div class="t onacc" style="top:20px;height:44px;line-height:44px;letter-spacing:-0.96px;left:457.52px;width:1200px;text-align:center;">Page 1</div><div class="t swtx" style="top:20px;height:44px;line-height:44px;letter-spacing:-0.96px;left:689.52px;width:1200px;text-align:center;">Page 2</div><div class="t swtx" style="top:20px;height:44px;line-height:44px;letter-spacing:-0.96px;left:921.52px;width:1200px;text-align:center;">Page 3</div><i class="hdot" style="left:2297.25px;top:40.25px"></i><i class="hdot" style="left:2308.25px;top:40.25px"></i><i class="hdot" style="left:2319.25px;top:40.25px"></i><div class="hsepv" style="left:2362px;top:20px;width:2px;height:44px;"></div><i class="ln hfg" style="left:2396px;top:47px;width:17px;height:2px"></i><i class="hmax" style="left:2464px;top:34px"></i><svg class="hfg" style="left:2530px;top:32px" width="20" height="20" viewBox="-10.0 -10.0 20 20"><path d="M-8.0 -8.0L8.0 8.0M8.0 -8.0L-8.0 8.0" stroke="currentColor" stroke-width="2.2" fill="none"/></svg><div class="vsep" style="left:660px;top:104px;width:2px;height:1049px;"></div><div class="vsep" style="left:970px;top:104px;width:2px;height:1049px;"></div><div class="vsep" style="left:1602px;top:104px;width:2px;height:1049px;"></div><div class="vsep" style="left:1990px;top:104px;width:2px;height:1049px;"></div><div class="en foc" style="left:20px;top:104px;width:620px;height:64px;"></div><div class="sel" style="left:38px;top:116px;width:198px;height:38px;"></div><div class="t onacc" style="top:114px;height:44px;line-height:44px;letter-spacing:0.58px;left:38.5px;">comboboxentry</div><svg class="fgarrow" style="left:597.5px;top:132px" width="20" height="10" viewBox="0 0 20 10"><path d="M0 0H20L10 10Z" fill="currentColor"/></svg><div class="en dis" style="left:20.5px;top:188px;width:619.5px;height:64px;"></div><div class="t dtx" style="top:198px;height:44px;line-height:44px;letter-spacing:0.58px;left:38.5px;">comboboxentry</div><svg class="darrow" style="left:597.5px;top:216px" width="20" height="10" viewBox="0 0 20 10"><path d="M0 0H20L10 10Z" fill="currentColor"/></svg><div class="en" style="left:20.5px;top:272px;width:619.5px;height:60px;"></div><div class="t fg2" style="top:280px;height:44px;line-height:44px;letter-spacing:-0.52px;left:38.5px;">Click icon to change mode</div><svg class="fg2" style="left:592px;top:287px" width="28" height="32" viewBox="-14 -16 28 32"><path d="M0 -9.5A10.5 10.5 0 1 0 10.5 1" fill="none" stroke="currentColor" stroke-width="2"/><path d="M-1.5 -14.5L4 -9.5L-1.5 -4.5" fill="none" stroke="currentColor" stroke-width="2"/></svg><div class="en dis" style="left:20.5px;top:352px;width:619.5px;height:60px;"></div><div class="t dtx" style="top:360px;height:44px;line-height:44px;letter-spacing:0.7px;left:38.5px;">entry</div><div class="en" style="left:20.5px;top:432px;width:619.5px;height:64px;"></div><div class="vline" style="left:576px;top:434px;width:2px;height:60px;"></div><div class="t" style="top:442px;height:44px;line-height:44px;letter-spacing:0.7px;left:38.5px;">entry</div><svg class="fg" style="left:598.2px;top:455px" width="19" height="19" viewBox="-9.5 -9.5 19 19"><path d="M-7.5 -7.5L7.5 7.5M7.5 -7.5L-7.5 7.5" stroke="currentColor" stroke-width="2.4" fill="none"/></svg><div class="en" style="left:20.5px;top:516px;width:619.5px;height:64px;"></div><div class="t" style="top:526px;height:44px;line-height:44px;letter-spacing:0.27px;left:41px;">Left</div><svg class="fg" style="left:188px;top:544px" width="20" height="10" viewBox="0 0 20 10"><path d="M0 0H20L10 10Z" fill="currentColor"/></svg><div class="t" style="top:526px;height:44px;line-height:44px;letter-spacing:0.35px;left:247px;">Middle</div><svg class="fg" style="left:394px;top:544px" width="20" height="10" viewBox="0 0 20 10"><path d="M0 0H20L10 10Z" fill="currentColor"/></svg><div class="t" style="top:526px;height:44px;line-height:44px;left:453px;">Right</div><svg class="fg" style="left:597.5px;top:544px" width="20" height="10" viewBox="0 0 20 10"><path d="M0 0H20L10 10Z" fill="currentColor"/></svg><div class="t" style="top:614px;height:44px;line-height:44px;letter-spacing:-0.03px;left:21px;">label</div><div class="t dtx" style="top:614px;height:44px;line-height:44px;letter-spacing:-0.03px;left:118.6px;">label</div><div class="en" style="left:216px;top:600px;width:192px;height:72px;"></div><div class="t" style="top:614px;height:44px;line-height:44px;letter-spacing:-0.33px;left:234.6px;">50</div><i class="ln fgs" style="left:306px;top:635px;width:20px;height:2px"></i><i class="ln fgs" style="left:361px;top:635px;width:20px;height:2px"></i><i class="ln fgs" style="left:370px;top:626px;width:2px;height:20px"></i><div class="en dis" style="left:448px;top:600px;width:192px;height:72px;"></div><i class="ln dfg" style="left:538px;top:635px;width:20px;height:2px"></i><i class="ln dfg" style="left:593px;top:635px;width:20px;height:2px"></i><i class="ln dfg" style="left:602px;top:626px;width:2px;height:20px"></i><div class="cb on" style="left:29.7px;top:702px"><svg width="36" height="36" viewBox="0 0 36 36" style="position:absolute;left:0;top:0"><path d="M8.5 19.5L15 26L28 12" fill="none" stroke="currentColor" stroke-width="2.2"/></svg></div><div class="t" style="top:697.5px;height:44px;line-height:44px;letter-spacing:0.3px;left:80.9px;">checkbutton</div><div class="rb on" style="left:289.8px;top:700px"><i class="dot"></i></div><div class="t" style="top:697.5px;height:44px;line-height:44px;letter-spacing:0.58px;left:342.7px;">radiobutton</div><svg class="spin" style="left:535.3px;top:703.6px" width="34" height="34" viewBox="-17 -17 34 34"><path d="M-2.22 6.11L-5.30 14.57" stroke="currentColor" stroke-width="1.9" stroke-opacity="1.00"/><path d="M1.13 6.40L2.69 15.26" stroke="currentColor" stroke-width="1.9" stroke-opacity="0.72"/><path d="M4.18 4.98L9.96 11.87" stroke="currentColor" stroke-width="1.9" stroke-opacity="0.68"/><path d="M6.11 2.22L14.57 5.30" stroke="currentColor" stroke-width="1.9" stroke-opacity="0.62"/><path d="M6.40 -1.13L15.26 -2.69" stroke="currentColor" stroke-width="1.9" stroke-opacity="0.50"/><path d="M4.98 -4.18L11.87 -9.96" stroke="currentColor" stroke-width="1.9" stroke-opacity="0.45"/><path d="M2.22 -6.11L5.30 -14.57" stroke="currentColor" stroke-width="1.9" stroke-opacity="0.40"/><path d="M-1.13 -6.40L-2.69 -15.26" stroke="currentColor" stroke-width="1.9" stroke-opacity="0.30"/><path d="M-4.18 -4.98L-9.96 -11.87" stroke="currentColor" stroke-width="1.9" stroke-opacity="0.24"/><path d="M-6.11 -2.22L-14.57 -5.30" stroke="currentColor" stroke-width="1.9" stroke-opacity="0.17"/><path d="M-6.40 1.13L-15.26 2.69" stroke="currentColor" stroke-width="1.9" stroke-opacity="0.10"/><path d="M-4.98 4.18L-11.87 9.96" stroke="currentColor" stroke-width="1.9" stroke-opacity="0.07"/></svg><div class="cb off" style="left:29.7px;top:770.1px"></div><div class="t" style="top:765.6px;height:44px;line-height:44px;letter-spacing:0.3px;left:80.9px;">checkbutton</div><div class="rb off" style="left:289.8px;top:768.1px"></div><div class="t" style="top:765.6px;height:44px;line-height:44px;letter-spacing:0.58px;left:342.7px;">radiobutton</div><div class="cb mix" style="left:29.7px;top:838.2px"><i class="sq"></i></div><div class="t" style="top:833.7px;height:44px;line-height:44px;letter-spacing:0.3px;left:80.9px;">checkbutton</div><div class="rb mix" style="left:289.8px;top:836.2px"><i class="bar"></i></div><div class="t" style="top:833.7px;height:44px;line-height:44px;letter-spacing:0.58px;left:342.7px;">radiobutton</div><div class="cb on dis" style="left:29.7px;top:906.3px"><svg width="36" height="36" viewBox="0 0 36 36" style="position:absolute;left:0;top:0"><path d="M8.5 19.5L15 26L28 12" fill="none" stroke="currentColor" stroke-width="2.2"/></svg></div><div class="t dtx" style="top:901.8px;height:44px;line-height:44px;letter-spacing:0.3px;left:80.9px;">checkbutton</div><div class="rb on dis" style="left:289.8px;top:904.3px"><i class="dot"></i></div><div class="t dtx" style="top:901.8px;height:44px;line-height:44px;letter-spacing:0.58px;left:342.7px;">radiobutton</div><svg class="spin dis" style="left:535.3px;top:907.9px" width="34" height="34" viewBox="-17 -17 34 34"><path d="M-2.22 6.11L-5.30 14.57" stroke="currentColor" stroke-width="1.9" stroke-opacity="1.00"/><path d="M1.13 6.40L2.69 15.26" stroke="currentColor" stroke-width="1.9" stroke-opacity="0.72"/><path d="M4.18 4.98L9.96 11.87" stroke="currentColor" stroke-width="1.9" stroke-opacity="0.68"/><path d="M6.11 2.22L14.57 5.30" stroke="currentColor" stroke-width="1.9" stroke-opacity="0.62"/><path d="M6.40 -1.13L15.26 -2.69" stroke="currentColor" stroke-width="1.9" stroke-opacity="0.50"/><path d="M4.98 -4.18L11.87 -9.96" stroke="currentColor" stroke-width="1.9" stroke-opacity="0.45"/><path d="M2.22 -6.11L5.30 -14.57" stroke="currentColor" stroke-width="1.9" stroke-opacity="0.40"/><path d="M-1.13 -6.40L-2.69 -15.26" stroke="currentColor" stroke-width="1.9" stroke-opacity="0.30"/><path d="M-4.18 -4.98L-9.96 -11.87" stroke="currentColor" stroke-width="1.9" stroke-opacity="0.24"/><path d="M-6.11 -2.22L-14.57 -5.30" stroke="currentColor" stroke-width="1.9" stroke-opacity="0.17"/><path d="M-6.40 1.13L-15.26 2.69" stroke="currentColor" stroke-width="1.9" stroke-opacity="0.10"/><path d="M-4.98 4.18L-11.87 9.96" stroke="currentColor" stroke-width="1.9" stroke-opacity="0.07"/></svg><div class="cb off dis" style="left:29.7px;top:974.4px"></div><div class="t dtx" style="top:969.9px;height:44px;line-height:44px;letter-spacing:0.3px;left:80.9px;">checkbutton</div><div class="rb off dis" style="left:289.8px;top:972.4px"></div><div class="t dtx" style="top:969.9px;height:44px;line-height:44px;letter-spacing:0.58px;left:342.7px;">radiobutton</div><div class="cb mix dis" style="left:29.7px;top:1042.5px"><i class="sq"></i></div><div class="t dtx" style="top:1038px;height:44px;line-height:44px;letter-spacing:0.3px;left:80.9px;">checkbutton</div><div class="rb mix dis" style="left:289.8px;top:1040.5px"><i class="bar"></i></div><div class="t dtx" style="top:1038px;height:44px;line-height:44px;letter-spacing:0.58px;left:342.7px;">radiobutton</div><div class="bt" style="left:682px;top:104px;width:268px;height:64px;"></div><div class="t" style="top:114px;height:44px;line-height:44px;letter-spacing:1.11px;left:216.56px;width:1200px;text-align:center;">togglebutton</div><div class="bt dis" style="left:682px;top:188px;width:268px;height:64px;"></div><div class="t dtx" style="top:198px;height:44px;line-height:44px;letter-spacing:1.11px;left:216.56px;width:1200px;text-align:center;">togglebutton</div><div class="bt on" style="left:682px;top:272px;width:268px;height:64px;"></div><div class="t onacc" style="top:282px;height:44px;line-height:44px;letter-spacing:1.11px;left:216.56px;width:1200px;text-align:center;">togglebutton</div><div class="bt on dis" style="left:682px;top:356px;width:268px;height:64px;"></div><div class="t onaccd" style="top:366px;height:44px;line-height:44px;letter-spacing:1.11px;left:216.56px;width:1200px;text-align:center;">togglebutton</div><div class="bt" style="left:682px;top:440px;width:268px;height:64px;"></div><div class="t" style="top:450px;height:44px;line-height:44px;letter-spacing:0.18px;left:702.3px;">Andrea</div><svg class="fg" style="left:908px;top:468px" width="20" height="10" viewBox="0 0 20 10"><path d="M0 0H20L10 10Z" fill="currentColor"/></svg><div class="bt dis" style="left:682px;top:524px;width:268px;height:64px;"></div><div class="t dtx" style="top:534px;height:44px;line-height:44px;letter-spacing:0.82px;left:702.3px;">Otto</div><svg class="darrow" style="left:908px;top:552px" width="20" height="10" viewBox="0 0 20 10"><path d="M0 0H20L10 10Z" fill="currentColor"/></svg><div class="bt" style="left:682px;top:608px;width:268px;height:64px;"></div><div class="t" style="top:618px;height:44px;line-height:44px;letter-spacing:-0.51px;left:708.7px;">Sans Regular</div><div class="t" style="top:618px;height:44px;line-height:44px;letter-spacing:-0.33px;left:892.6px;">12</div><div class="bt" style="left:682px;top:692px;width:268px;height:72px;"></div><div class="swatch" style="left:696px;top:706px;width:240px;height:44px;"></div><div class="bt" style="left:682px;top:784px;width:268px;height:64px;"></div><div class="t cjk" style="top:794px;height:44px;line-height:44px;font-size:26.67px;left:149px;width:1200px;text-align:center;letter-spacing:8px;">（无）</div><svg class="fg" style="left:901px;top:803px" width="34" height="28" viewBox="0 0 34 28"><path d="M2 24V3.5Q2 1.5 4 1.5H11Q12.5 1.5 13.5 2.5L15 4H29Q32 4 32 7V23Q32 26 29 26H5Q2 26 2 23Z" fill="none" stroke="currentColor" stroke-width="2"/><path d="M2 9.5H32" stroke="currentColor" stroke-width="2"/></svg><div class="t link" style="top:876px;height:44px;line-height:44px;letter-spacing:0.96px;left:216.48px;width:1200px;text-align:center;">link button</div><div class="sw on" style="left:776px;top:960px;width:80px;height:40px;"><i style="left:50px"></i></div><div class="sw off" style="left:776px;top:1044px;width:80px;height:40px;"><i style="left:8px"></i></div><div class="tr rnd" style="left:992px;top:104px;width:589px;height:6px;"></div><div class="fill rnd" style="left:992px;top:104px;width:294px;height:6px;"></div><div class="tr rnd" style="left:992px;top:122px;width:589px;height:6px;"></div><div class="fill rnd" style="left:1288px;top:122px;width:293px;height:6px;"></div><div class="t fg3" style="top:132.8px;height:44px;line-height:44px;font-size:23.8px;letter-spacing:-0.96px;left:686.02px;width:1200px;text-align:center;">50%</div><div class="tr rnd" style="left:992px;top:172px;width:589px;height:6px;"></div><div class="fill rnd" style="left:1037.5px;top:172px;width:118px;height:6px;"></div><div class="tr" style="left:992px;top:190px;width:589px;height:6px;"></div><div class="fill" style="left:992px;top:190px;width:354px;height:6px;"></div><div class="fill" style="left:992px;top:208px;width:114.6px;height:6px;"></div><div class="fill" style="left:1110.6px;top:208px;width:114.6px;height:6px;"></div><div class="tr" style="left:1229.2px;top:208px;width:114.6px;height:6px;"></div><div class="tr" style="left:1347.8px;top:208px;width:114.6px;height:6px;"></div><div class="tr" style="left:1466.4px;top:208px;width:114.6px;height:6px;"></div><div class="str" style="left:1016px;top:256px;width:542px;height:4px;"></div><div class="fill" style="left:1016px;top:256px;width:268px;height:4px;"></div><i class="knob" style="left:1272px;top:246px"></i><div class="strd2" style="left:1016px;top:320px;width:542px;height:4px;"></div><div class="strd" style="left:1016px;top:320px;width:268px;height:4px;"></div><i class="knob dis" style="left:1272px;top:310px"></i><div class="str" style="left:1016px;top:396px;width:542px;height:4px;"></div><svg class="knobc" style="left:1272.6px;top:385px" width="26" height="34" viewBox="-13 -13 26 34"><path d="M0 -12A12 12 0 0 1 12 0C12 6 5 11 0 17C-5 11 -12 6 -12 0A12 12 0 0 1 0 -12Z" fill="currentColor"/></svg><div class="tick" style="left:1016px;top:414px;width:2px;height:16px;"></div><div class="tick" style="left:1150px;top:414px;width:2px;height:16px;"></div><div class="tick" style="left:1285.8px;top:414px;width:2px;height:16px;"></div><div class="tick" style="left:1422px;top:414px;width:2px;height:16px;"></div><div class="tick" style="left:1558px;top:414px;width:2px;height:16px;"></div><div class="tr" style="left:1128px;top:442px;width:6px;height:711px;"></div><div class="fill" style="left:1128px;top:442px;width:6px;height:355px;"></div><div class="tr" style="left:1146px;top:442px;width:6px;height:711px;"></div><div class="fill" style="left:1146px;top:797px;width:6px;height:356px;"></div><div class="t fg2b" style="top:440px;height:44px;line-height:44px;letter-spacing:0.28px;left:795.64px;width:1200px;text-align:center;">50.0</div><div class="str" style="left:1394px;top:504px;width:4px;height:626px;"></div><div class="fill" style="left:1394px;top:504px;width:4px;height:308px;"></div><i class="knob" style="left:1384px;top:800px"></i><div class="strd2" style="left:1474px;top:504px;width:4px;height:626px;"></div><div class="strd" style="left:1474px;top:504px;width:4px;height:308px;"></div><i class="knob dis" style="left:1464px;top:800px"></i><div class="fr in" style="left:1624.5px;top:124px;width:345px;height:232px;"></div><div class="frlbg" style="left:1623.5px;top:108px;width:72px;height:29px;"></div><div class="t" style="top:102px;height:44px;line-height:44px;font-weight:700;letter-spacing:1.13px;left:1624.5px;">Inset</div><div class="fr out" style="left:1624.5px;top:390px;width:345px;height:232px;"></div><div class="frlbg" style="left:1623.5px;top:374px;width:94px;height:29px;"></div><div class="t" style="top:368px;height:44px;line-height:44px;font-weight:700;letter-spacing:0.36px;left:1624.5px;">Outset</div><div class="fr gr" style="left:1624.5px;top:656px;width:345px;height:232px;"></div><div class="frlbg" style="left:1623.5px;top:640px;width:97px;height:29px;"></div><div class="t" style="top:634px;height:44px;line-height:44px;font-weight:700;letter-spacing:-0.57px;left:1624.5px;">Groove</div><div class="fr rd" style="left:1624.5px;top:922px;width:345px;height:232px;"></div><div class="frlbg" style="left:1623.5px;top:906px;width:75px;height:29px;"></div><div class="t" style="top:900px;height:44px;line-height:44px;font-weight:700;letter-spacing:-0.66px;left:1624.5px;">Ridge</div><div class="view" style="left:2012.5px;top:105px;width:547px;height:546px;"></div><div class="thead" style="left:2014.5px;top:107px;width:543px;height:56px;"></div><div class="tline" style="left:2014.5px;top:162px;width:543px;height:2px;"></div><div class="tline" style="left:2093.3px;top:107px;width:2px;height:56px;"></div><div class="tline" style="left:2175.5px;top:107px;width:2px;height:56px;"></div><div class="tline" style="left:2299.4px;top:107px;width:2px;height:56px;"></div><div class="t thtx" style="top:111.5px;height:44px;line-height:44px;letter-spacing:-0.55px;left:2027px;">Cool</div><div class="t thtx" style="top:111.5px;height:44px;line-height:44px;letter-spacing:0.23px;left:2108.4px;">Icon</div><div class="t thtx" style="top:111.5px;height:44px;line-height:44px;letter-spacing:0.12px;left:2190.8px;">Name</div><div class="t thtx" style="top:111.5px;height:44px;line-height:44px;letter-spacing:-0.22px;left:2315px;">Nick</div><div class="cb on" style="left:2036px;top:176px"><svg width="36" height="36" viewBox="0 0 36 36" style="position:absolute;left:0;top:0"><path d="M8.5 19.5L15 26L28 12" fill="none" stroke="currentColor" stroke-width="2.2"/></svg></div><svg class="fg" style="left:2120.7px;top:179px" width="30" height="30" viewBox="-15 -15 30 30"><circle r="14" fill="currentColor"/><path d="M-7.5 0L-2.5 5L7.5 -5" fill="none" class="knock" stroke-width="3.6"/></svg><div class="t" style="top:172px;height:44px;line-height:44px;letter-spacing:0.18px;left:2186.5px;">Andrea</div><div class="t" style="top:172px;height:44px;line-height:44px;letter-spacing:-0.42px;left:2311px;">Cimi</div><div class="cb off" style="left:2036px;top:236px"></div><svg class="fg" style="left:2118.7px;top:237px" width="34" height="34" viewBox="-17 -17 34 34"><circle r="14.8" fill="none" stroke="currentColor" stroke-width="2.2"/><path d="M0 -9V4" stroke="currentColor" stroke-width="3.6"/><circle cy="8.5" r="2.2" fill="currentColor"/></svg><div class="t" style="top:232px;height:44px;line-height:44px;letter-spacing:0.82px;left:2186.5px;">Otto</div><div class="t" style="top:232px;height:44px;line-height:44px;letter-spacing:0.05px;left:2311px;">chaotic</div><div class="cb on" style="left:2036px;top:296px"><svg width="36" height="36" viewBox="0 0 36 36" style="position:absolute;left:0;top:0"><path d="M8.5 19.5L15 26L28 12" fill="none" stroke="currentColor" stroke-width="2.2"/></svg></div><svg class="fg" style="left:2119.7px;top:298px" width="34" height="34" viewBox="-16 -16 34 34"><path d="M5.040 -10.990A12.500 12.500 0 1 1 -10.490 4.540A11 11 0 0 0 5.040 -10.990Z" fill="none" stroke="currentColor" stroke-width="2" stroke-linejoin="round"/><path d="M-4 -14.500l1.300 2.700 2.900.3-2.200 2 .6 2.900-2.600-1.500-2.600 1.500.6-2.900-2.200-2 2.900-.3z" fill="currentColor"/><path d="M-11.500 -7.500l.9 1.800 1.900.2-1.400 1.300.4 1.900-1.800-1-1.800 1 .4-1.900-1.400-1.300 1.900-.2z" fill="currentColor"/></svg><div class="t" style="top:292px;height:44px;line-height:44px;letter-spacing:-0.01px;left:2186.5px;">Orville</div><div class="t" style="top:292px;height:44px;line-height:44px;letter-spacing:-0.18px;left:2311px;">Redenbacher</div><div class="rb on" style="left:2034px;top:354px"><i class="dot"></i></div><svg class="fg" style="left:2117.7px;top:355px" width="36" height="36" viewBox="-18 -19 36 36"><circle cx="-12.300" cy="-1.500" r="3.600" fill="none" stroke="currentColor" stroke-width="2.200"/><circle cx="12.300" cy="-1.500" r="3.600" fill="none" stroke="currentColor" stroke-width="2.200"/><circle cx="0" cy="-2.500" r="9.800" fill="currentColor"/><ellipse cx="0" cy="7.500" rx="12" ry="7" fill="currentColor"/><path d="M-1.500 -12C-1.500 -15 0.500 -17 3.500 -17.500C1.800 -16 1.800 -14 2.500 -12Z" fill="currentColor"/><circle cx="-4.300" cy="-3.500" r="2" class="knockf"/><circle cx="4.300" cy="-3.500" r="2" class="knockf"/><path d="M-6.500 6Q0 11 6.500 6Q0 14.500 -6.500 6Z" class="knockf"/></svg><div class="t" style="top:352px;height:44px;line-height:44px;letter-spacing:-0.58px;left:2186.5px;">Benja...</div><div class="t" style="top:352px;height:44px;line-height:44px;letter-spacing:-0.07px;left:2311px;">Company</div><div class="view clip" style="left:2012.5px;top:665px;width:547px;height:488px;"><div class="t" style="top:-3px;height:44px;line-height:44px;letter-spacing:-0.07px;left:20.5px;">Lorem ipsum dolor sit amet,</div><div class="t" style="top:35px;height:44px;line-height:44px;letter-spacing:-0.1px;left:20.5px;">consectetur adipiscing elit.</div><div class="t" style="top:73px;height:44px;line-height:44px;letter-spacing:0.04px;left:20.5px;">Nullam fringilla, est ut feugiat ultrices,</div><div class="t" style="top:111px;height:44px;line-height:44px;letter-spacing:-0.21px;left:20.5px;">elit lacus ultricies nibh, id commodo</div><div class="t" style="top:149px;height:44px;line-height:44px;letter-spacing:0.24px;left:20.5px;">tortor nisi id elit.</div><div class="t" style="top:187px;height:44px;line-height:44px;letter-spacing:-0.46px;left:20.5px;">Class aptent taciti sociosqu ad litora</div><div class="t" style="top:225px;height:44px;line-height:44px;letter-spacing:0.15px;left:20.5px;">torquent per conubia nostra, per</div><div class="t" style="top:263px;height:44px;line-height:44px;letter-spacing:-0.15px;left:20.5px;">inceptos himenaeos.</div><div class="t" style="top:301px;height:44px;line-height:44px;letter-spacing:-0.23px;left:20.5px;">Morbi vel elit erat. Maecenas dignissim,</div><div class="t" style="top:339px;height:44px;line-height:44px;letter-spacing:0.16px;left:20.5px;">dui et pharetra rutrum, tellus lectus</div><div class="t" style="top:377px;height:44px;line-height:44px;letter-spacing:-0.22px;left:20.5px;">rutrum mi, a convallis libero nisi quis</div><div class="t" style="top:415px;height:44px;line-height:44px;letter-spacing:0.09px;left:20.5px;">tellus.</div><div class="t" style="top:453px;height:44px;line-height:44px;letter-spacing:-0.13px;left:20.5px;">Nulla facilisi. Nullam eleifend lobortis</div><div class="dash" style="left:0px;top:482px;width:547px;height:2px;"></div></div><div class="hsep" style="left:20px;top:1175px;width:2540px;height:2px;"></div><div class="nb" style="left:20px;top:1196px;width:620px;height:272px;"></div><div class="nbhead" style="left:22px;top:1198px;width:616px;height:63px;"></div><div class="nbline" style="left:22px;top:1260px;width:616px;height:2px;"></div><div class="nbtab" style="left:38px;top:1204px;width:138px;height:58px;border-bottom:0;border-radius:4px 4px 0 0;"></div><div class="t" style="top:1212.5px;height:44px;line-height:44px;letter-spacing:-0.4px;left:-493.2px;width:1200px;text-align:center;">page 1</div><div class="t nbtx" style="top:1212.5px;height:44px;line-height:44px;letter-spacing:-0.4px;left:-354.7px;width:1200px;text-align:center;">page 2</div><div class="t nbtx" style="top:1212.5px;height:44px;line-height:44px;letter-spacing:-0.4px;left:-216.7px;width:1200px;text-align:center;">page 3</div><div class="nb" style="left:660px;top:1196px;width:620px;height:272px;"></div><div class="nbhead" style="left:1136px;top:1198px;width:142px;height:268px;"></div><div class="nbline" style="left:1135.5px;top:1198px;width:2px;height:268px;"></div><div class="nbtab" style="left:1135.5px;top:1214.5px;width:136px;height:60px;border-left:0;border-radius:0 4px 4px 0;"></div><div class="t" style="top:1223px;height:44px;line-height:44px;letter-spacing:-0.4px;left:602.8px;width:1200px;text-align:center;">page 1</div><div class="t nbtx" style="top:1283px;height:44px;line-height:44px;letter-spacing:-0.4px;left:602.8px;width:1200px;text-align:center;">page 2</div><div class="t nbtx" style="top:1343px;height:44px;line-height:44px;letter-spacing:-0.4px;left:602.8px;width:1200px;text-align:center;">page 3</div><div class="nb" style="left:1300px;top:1196px;width:620px;height:272px;"></div><div class="nbhead" style="left:1302px;top:1402px;width:616px;height:64px;"></div><div class="nbline" style="left:1302px;top:1401px;width:616px;height:2px;"></div><div class="nbtab" style="left:1318px;top:1401px;width:138px;height:56px;border-top:0;border-radius:0 0 4px 4px;"></div><div class="t" style="top:1408.5px;height:44px;line-height:44px;letter-spacing:-0.4px;left:786.8px;width:1200px;text-align:center;">page 1</div><div class="t nbtx" style="top:1408.5px;height:44px;line-height:44px;letter-spacing:-0.4px;left:925.3px;width:1200px;text-align:center;">page 2</div><div class="t nbtx" style="top:1408.5px;height:44px;line-height:44px;letter-spacing:-0.4px;left:1063.3px;width:1200px;text-align:center;">page 3</div><div class="nb" style="left:1940px;top:1196px;width:620px;height:272px;"></div><div class="nbhead" style="left:1942px;top:1198px;width:142px;height:268px;"></div><div class="nbline" style="left:2082.5px;top:1198px;width:2px;height:268px;"></div><div class="nbtab" style="left:1948px;top:1214.5px;width:136.5px;height:60px;border-right:0;border-radius:4px 0 0 4px;"></div><div class="t" style="top:1223px;height:44px;line-height:44px;letter-spacing:-0.4px;left:1416.3px;width:1200px;text-align:center;">page 1</div><div class="t nbtx" style="top:1283px;height:44px;line-height:44px;letter-spacing:-0.4px;left:1416.3px;width:1200px;text-align:center;">page 2</div><div class="t nbtx" style="top:1343px;height:44px;line-height:44px;letter-spacing:-0.4px;left:1416.3px;width:1200px;text-align:center;">page 3</div></div><div class="dock"><svg style="left:0;top:0" width="2188" height="144" viewBox="0 0 2188 144"><defs><radialGradient id="ff" cx=".62" cy=".2" r=".95"><stop offset="0" stop-color="#ffbd4f"/><stop offset=".45" stop-color="#ff8a2a"/><stop offset=".8" stop-color="#ff5a36"/><stop offset="1" stop-color="#f0334f"/></radialGradient><radialGradient id="at" cx=".5" cy=".5" r=".5"><stop offset="0" stop-color="#a8e6a0"/><stop offset=".7" stop-color="#7ed67c"/><stop offset="1" stop-color="#66c864"/></radialGradient><radialGradient id="mu" cx=".5" cy=".5" r=".5"><stop offset="0" stop-color="#fff6c8"/><stop offset=".75" stop-color="#ffe9a0"/><stop offset="1" stop-color="#ffe9a0" stop-opacity="0"/></radialGradient><linearGradient id="gl" x1="0" y1="0" x2="0" y2="1"><stop offset="0" stop-color="#c9e8f7"/><stop offset="1" stop-color="#8fc9ea"/></linearGradient></defs><g transform="translate(74 72)"><rect x="-30" y="-30" width="12" height="12" rx="2" fill="#e4ecec" fill-opacity=".85"/><rect x="-30" y="-6" width="12" height="12" rx="2" fill="#e4ecec" fill-opacity=".85"/><rect x="-30" y="18" width="12" height="12" rx="2" fill="#e4ecec" fill-opacity=".85"/><rect x="-6" y="-30" width="12" height="12" rx="2" fill="#e4ecec" fill-opacity=".85"/><rect x="-6" y="-6" width="12" height="12" rx="2" fill="#e4ecec" fill-opacity=".85"/><rect x="-6" y="18" width="12" height="12" rx="2" fill="#e4ecec" fill-opacity=".85"/><rect x="18" y="-30" width="12" height="12" rx="2" fill="#e4ecec" fill-opacity=".85"/><rect x="18" y="-6" width="12" height="12" rx="2" fill="#e4ecec" fill-opacity=".85"/><rect x="18" y="18" width="12" height="12" rx="2" fill="#e4ecec" fill-opacity=".85"/></g><g transform="translate(210 72)"><path d="M-41 -30Q-41 -33 -38 -33H-14Q-12 -33 -11 -31.500L-9 -29H36Q39 -29 39 -26V30H-41Z" fill="#2b84d6"/><path d="M-27 -33.500H-12V-31.500H-27Z" fill="#1f6fba"/><path d="M-35 -27H33V-10H-35Z" fill="#fff"/><path d="M-45 -17Q-45 -19 -43 -19H-8Q-6 -19 -5 -20.500L-1.500 -25Q-0.500 -26.500 1.500 -26.500H43Q45 -26.500 45 -24.500L44.500 33Q44.500 36 41.500 36H-41.500Q-44.500 36 -44.500 33Z" fill="#2f8fdf"/><path d="M-36 -12H36V20Q36 26 30 26H-30Q-36 26 -36 20Z" fill="#4aa3e8"/><path d="M10 -22.500H32V-20H10Z" fill="#2478c8"/></g><g transform="translate(345.5 73)"><path d="M-10 -32C-2 -36 4 -40 9 -43C10 -36 16 -32 24 -28C34 -20 40 -8 40 2A40 39 0 0 1 -40 2C-40 -8 -37 -18 -30 -26C-30 -21 -28 -18 -25 -16C-20 -22 -16 -28 -10 -32Z" fill="url(#ff)"/><circle cx="0" cy="0" r="19" fill="#a443d8"/><path d="M-28 -10C-20 -16 -10 -14 -4 -8C-8 -6 -14 -6 -18 -2C-22 2 -20 10 -14 16C-24 14 -32 2 -28 -10Z" fill="#ff9a3a"/><path d="M-6 -28C6 -24 20 -14 24 0C28 14 20 26 8 32C24 30 36 18 36 0C36 -14 26 -26 -6 -28Z" fill="#ff6a2c" opacity=".8"/></g><g transform="translate(481.6 72)"><path d="M-39 -20H39V33Q39 35 37 35H-37Q-39 35 -39 33Z" fill="#3aa3cf"/><path d="M-31 -35H28Q31 -35 31 -32V10H-31Z" fill="#fff"/><path d="M-39 -22L0 6L39 -22V33Q39 35 37 35H-37Q-39 35 -39 33Z" fill="#58bde3"/><path d="M-39 35L0 6L39 35Z" fill="#48b2dc"/><path d="M0 6L39 -22V34Z" fill="#7ccbe8" opacity=".7"/></g><g transform="translate(617.7 72)"><circle r="42.500" fill="#f4f4f4"/><circle r="28" fill="#2d2d2d"/><path d="M-14 -17L-8 -13Q0 -15 8 -13L14 -17Q15.500 -10 13.500 -6Q17 -1 16 5Q14 13 7 15V26H-7V20Q-12 22 -15 19Q-17 16 -19 15Q-17 13 -14 15.500Q-11 18 -7 16.500V15Q-14 13 -16 5Q-17 -1 -13.500 -6Q-15.500 -10 -14 -17Z" fill="#d6d6d6"/></g><g transform="translate(754 72)"><circle r="42.500" fill="#68c966"/><circle r="32" fill="url(#at)"/><g fill="none" stroke="#f4fff0" stroke-width="2.200"><ellipse rx="26" ry="9.500" transform="rotate(-20)"/><ellipse rx="26" ry="9.500" transform="rotate(55)"/><ellipse rx="26" ry="9.500" transform="rotate(110)"/></g><circle r="3" fill="#fff"/></g><g transform="translate(890 74)"><rect x="-36" y="-38" width="72" height="62" rx="6" fill="#383d40"/><path d="M-42 -2Q-42 -8 -38 -10L-30 -14Q-24 -16 -18 -10Q-10 -2 -4 6Q4 12 12 8Q20 4 28 8L38 12Q42 14 42 20V32Q42 40 34 40H-34Q-42 40 -42 32Z" fill="#5ec08c"/><path d="M-42 20V32Q-42 40 -34 40H34Q42 40 42 32V20Q42 30 34 30H-34Q-42 30 -42 20Z" fill="#6fdba0" opacity=".8"/><g fill="none" stroke="#e8fff2" stroke-width="2.400"><path d="M-26 -14V-19H-21M-15 -19H-10V-14M-10 -9V-4H-15M-21 -4H-26V-9"/><path d="M15 5V0H20M26 0H31V5M31 10V15H26M20 15H15V10"/></g></g><g transform="translate(1026 72)"><path d="M0 -39Q4 -39 8 -35L36 -7Q40 -2 34 2L22 8Q16 12 24 16L30 19Q32 22 26 24L14 28Q8 32 14 36Q10 42 2 38Q-6 34 -14 36Q-22 32 -16 28Q-30 28 -26 22Q-36 20 -30 14L-24 10Q-20 6 -30 2Q-40 -2 -34 -8L-8 -35Q-4 -39 0 -39Z" fill="#6b6b6b"/><path d="M14 -20L36 -2Q40 3 30 8Q22 11 28 15L34 19L22 23Q18 12 26 6Q30 2 14 -20Z" fill="#2e2e2e"/><path d="M0 -32L14 -16L6 -19L2 -12L-3 -19L-8 -10L-16 -17Z" fill="#fff"/><ellipse cx="-24" cy="27" rx="7" ry="3" fill="#7a7a7a"/><ellipse cx="33" cy="18" rx="5" ry="2.500" fill="#2e2e2e"/></g><g transform="translate(1162 72)"><rect x="2" y="-39" width="37" height="78" rx="7" fill="#3899d4"/><rect x="-39" y="-45" width="41" height="90" rx="9" fill="#a6d2ea" fill-opacity=".93"/><path d="M-9 -24V24" stroke="#5b9fc8" stroke-width="2.500"/><path d="M15 -24V24" stroke="#2a78b0" stroke-width="2.500"/><circle cx="-9" cy="-10" r="6.500" fill="#fff"/><circle cx="15" cy="9" r="6.500" fill="#fff"/><circle cx="0" cy="58" r="6" fill="#b8b8b8"/></g><g transform="translate(1298 72)"><path d="M-41 -30Q-41 -33 -38 -33H-14Q-12 -33 -11 -31.500L-9 -29H36Q39 -29 39 -26V30H-41Z" fill="#2b84d6"/><path d="M-27 -33.500H-12V-31.500H-27Z" fill="#1f6fba"/><path d="M-35 -27H33V-10H-35Z" fill="#fff"/><path d="M-45 -17Q-45 -19 -43 -19H-8Q-6 -19 -5 -20.500L-1.500 -25Q-0.500 -26.500 1.500 -26.500H43Q45 -26.500 45 -24.500L44.500 33Q44.500 36 41.500 36H-41.500Q-44.500 36 -44.500 33Z" fill="#2f8fdf"/><path d="M-36 -12H36V20Q36 26 30 26H-30Q-36 26 -36 20Z" fill="#4aa3e8"/><path d="M10 -22.500H32V-20H10Z" fill="#2478c8"/></g><g transform="translate(1434 72)"><circle cx="6" cy="0" r="36" fill="#f5c84c"/><circle cx="20" cy="0" r="9" fill="#e6b53c"/><rect x="-39" y="-39" width="72" height="78" rx="5" fill="#efefef"/><circle cx="-4" cy="0" r="30" fill="url(#mu)"/><path transform="translate(-3 1) scale(.8)" d="M-7 -20L13 -27Q10 -16 1 -9L-1 -11L-1 12A10.500 9.500 0 1 1 -7 3.500Z" fill="#17d38a"/></g><g transform="translate(1567 72)"><path d="M-27 -31Q-27 -39 -19 -39H16L39 -16V31Q39 39 31 39H-19Q-27 39 -27 31Z" fill="#a4cc4e"/><path d="M16 -39L39 -16H24Q16 -16 16 -24Z" fill="#d3e8a4"/><path d="M-40 -14H-26Q-29 -24 -20 -24Q-11 -24 -14 -14H-2V-2Q8 -5 8 4Q8 13 -2 10V23H-14Q-11 13 -20 13Q-29 13 -26 23H-40V10Q-31 13 -31 4Q-31 -5 -40 -2Z" fill="#eef5df" fill-opacity=".92"/></g><g transform="translate(1706 72)"><path d="M-40 4A40 40 0 0 1 40 -4Q42 14 26 20Q12 24 6 16Q14 10 12 0Q8 -14 -8 -14Q-30 -12 -40 4Z" fill="#4fd9ae"/><path d="M-40 2Q-30 -24 -4 -24Q14 -24 16 -8Q4 -16 -8 -8Q-20 2 -14 18Q-8 34 10 38Q-10 44 -26 32Q-42 20 -40 2Z" fill="#158fe8"/><path d="M-14 10Q-20 -6 -6 -12Q-12 0 -4 10Q-10 14 -8 26Q-12 20 -14 10Z" fill="#0c5fb8"/><rect x="-13" y="13" width="54" height="28" rx="6" fill="#dfe9f2"/></g><g transform="translate(1706 72)"><text x="14" y="33.500" text-anchor="middle" font-family="Liberation Sans,sans-serif" font-weight="700" font-size="17.5" fill="#1c2a3c" letter-spacing=".4">DEV</text></g><g transform="translate(1839 72)"><clipPath id="cg"><rect x="-36" y="-39" width="72" height="72" rx="7"/></clipPath><g clip-path="url(#cg)"><rect x="-36" y="-39" width="72" height="72" rx="7" fill="#2f86d6"/><rect x="-36" y="-39" width="24" height="24" fill="#1f6fc0"/><rect x="-12" y="-39" width="24" height="24" fill="#2478c8"/><rect x="12" y="-39" width="24" height="24" fill="#3a8fdc"/><rect x="-36" y="-15" width="24" height="24" fill="#2f84d4"/><rect x="-12" y="-15" width="24" height="24" fill="#3b8fe0"/><rect x="12" y="-15" width="24" height="24" fill="#4a9be4"/><rect x="-36" y="9" width="24" height="24" fill="#3a8fdc"/><rect x="-12" y="9" width="24" height="24" fill="#4a9be4"/><rect x="12" y="9" width="24" height="24" fill="#58a6ea"/></g><path d="M-8 -12H18A27 27 0 1 1 -8 14Z" fill="#dcebf8" fill-opacity=".93"/><circle cx="18.500" cy="14.700" r="13" fill="#fff"/><path d="M13 14.700H24M18.500 9.200V20.200" stroke="#b8c4d0" stroke-width="1.200"/></g><g transform="translate(1978 72)"><circle r="40" fill="#6da6ea"/><circle r="21" fill="#5b94dc"/><circle r="10" fill="#6da6ea"/><path d="M-33 33L33 -34" stroke="#dfeaf8" stroke-width="13" stroke-linecap="round" stroke-opacity=".93"/></g><g transform="translate(2114 72)"><rect x="-39" y="-36" width="78" height="52" rx="9" fill="#379fd8"/><path d="M-27 -24H27M-27 -13H-4M4 -13H27" stroke="#1d6fa8" stroke-width="5" stroke-linecap="round"/><rect x="-45" y="-6" width="90" height="48" rx="14" fill="url(#gl)" fill-opacity=".95"/><path d="M-24 6H24M-24 21H24" stroke="#e8f6ff" stroke-width="2.500"/><circle cx="-10" cy="6" r="6" fill="#fff"/><circle cx="9" cy="21" r="6" fill="#fff"/><circle cx="-9" cy="58" r="6" fill="#3a78d8"/><circle cx="9" cy="58" r="6" fill="#3a78d8"/></g></svg></div></body></html>
